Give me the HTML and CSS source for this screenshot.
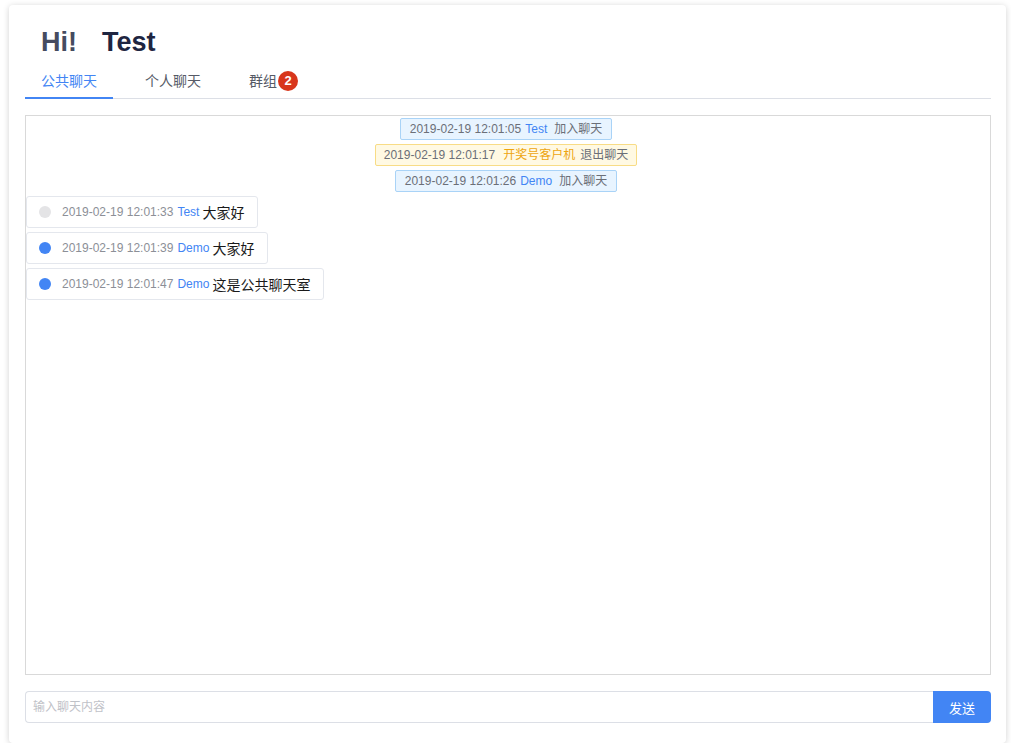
FILE: index.html
```html
<!DOCTYPE html>
<html lang="zh">
<head>
<meta charset="utf-8">
<title>Chat</title>
<link rel="stylesheet" href="styles.css">
</head>
<body>
<div class="card">
  <h1 class="title"><span class="hi">Hi!</span><span class="user">Test</span></h1>
  <div class="tabs">
    <div class="tab active">公共聊天</div>
    <div class="tab">个人聊天</div>
    <div class="tab">群组<span class="badge">2</span></div>
  </div>
  <div class="chat">
    <div class="sys info"><span class="time">2019-02-19 12:01:05</span><span class="name">Test</span><span class="act">加入聊天</span></div>
    <div class="sys warn"><span class="time">2019-02-19 12:01:17</span><span class="name">开奖号客户机</span><span class="act small">退出聊天</span></div>
    <div class="sys info"><span class="time">2019-02-19 12:01:26</span><span class="name">Demo</span><span class="act">加入聊天</span></div>
    <div class="msg"><span class="dot off"></span><span class="time">2019-02-19 12:01:33</span><span class="name">Test</span><span class="text">大家好</span></div>
    <div class="msg"><span class="dot"></span><span class="time">2019-02-19 12:01:39</span><span class="name">Demo</span><span class="text">大家好</span></div>
    <div class="msg"><span class="dot"></span><span class="time">2019-02-19 12:01:47</span><span class="name">Demo</span><span class="text">这是公共聊天室</span></div>
  </div>
  <div class="composer">
    <input class="input" type="text" placeholder="输入聊天内容">
    <button class="send">发送</button>
  </div>
</div>
</body>
</html>
```
FILE: styles.css
```css
* { box-sizing: border-box; }
html, body { margin: 0; padding: 0; background: #fff; }
body {
  padding: 5px 5px 0 9px;
  font-family: "Liberation Sans", "Noto Sans CJK SC", sans-serif;
  color: #303133;
}
.card {
  width: 997px;
  height: 738px;
  background: #fff;
  border-radius: 4px;
  box-shadow: 0 1px 6px rgba(0,0,0,0.18);
  padding: 22px 15px 20px 16px;
  display: flex;
  flex-direction: column;
}
.title {
  margin: 0 0 7px 0;
  padding-left: 16px;
  font-size: 27px;
  line-height: 30px;
  font-weight: bold;
  height: 30px;
}
.hi { color: #454b60; margin-right: 25px; }
.user { color: #1e2541; }
.tabs {
  display: flex;
  border-bottom: 1px solid #dcdfe6;
  height: 35px;
}
.tab {
  height: 35px;
  line-height: 32px;
  padding: 0 16px;
  margin-right: 16px;
  margin-bottom: -1px;
  font-size: 14px;
  color: #555a66;
  border-bottom: 2px solid transparent;
  display: flex;
  align-items: center;
}
.tab.active { color: #4285f4; border-bottom-color: #4285f4; }
.badge {
  display: inline-block;
  width: 20px;
  height: 20px;
  border-radius: 50%;
  background: #d8361c;
  color: #fff;
  font-size: 13px;
  font-weight: bold;
  line-height: 20px;
  text-align: center;
  margin-left: 1px;
}
.chat {
  margin-top: 16px;
  flex: 1;
  border: 1px solid #d9d9d9;
  padding: 2px 4px 0 0;
  display: flex;
  flex-direction: column;
  align-items: flex-start;
  gap: 4px;
}
.sys {
  align-self: center;
  font-size: 12px;
  line-height: 20px;
  padding: 0 9px;
  border: 1px solid #a9d3f7;
  border-radius: 2px;
  background: #e8f4ff;
  color: #6b6f78;
  white-space: nowrap;
}
.sys.warn { background: #fff9e3; border-color: #f8dc86; padding: 0 8px; }
.sys .time { color: #6b6f78; margin-right: 4px; }
.sys .name { color: #4285f4; }
.sys.warn .time { margin-right: 8px; }
.sys.warn .name { color: #eea510; }
.sys .act { margin-left: 7px; }
.sys .act.small { margin-left: 5px; }
.msg {
  display: flex;
  align-items: center;
  height: 32px;
  padding: 0 13px 0 12px;
  border: 1px solid #e4e7ed;
  border-radius: 3px;
  background: #fff;
  font-size: 12px;
  white-space: nowrap;
}
.dot {
  width: 12px;
  height: 12px;
  border-radius: 50%;
  background: #4285f4;
  margin-right: 11px;
}
.dot.off { background: #e4e4e6; }
.msg .time { color: #8c8f97; margin-right: 4px; }
.msg .name { color: #4285f4; margin-right: 3px; }
.msg .text { font-size: 14px; color: #1a1a1a; }
.composer {
  margin-top: 16px;
  display: flex;
  height: 32px;
}
.input {
  flex: 1;
  height: 32px;
  border: 1px solid #dcdfe6;
  border-right: none;
  border-radius: 4px 0 0 4px;
  padding: 0 7px;
  font-family: "Liberation Sans", "Noto Sans CJK SC", sans-serif;
  font-size: 12px;
  color: #303133;
  outline: none;
}
.input::placeholder { color: #bfc2c8; }
.send {
  width: 58px;
  height: 32px;
  border: none;
  border-radius: 0 4px 4px 0;
  background: #4285f4;
  color: #fff;
  font-family: "Liberation Sans", "Noto Sans CJK SC", sans-serif;
  font-size: 13px;
  padding: 0;
}
```
